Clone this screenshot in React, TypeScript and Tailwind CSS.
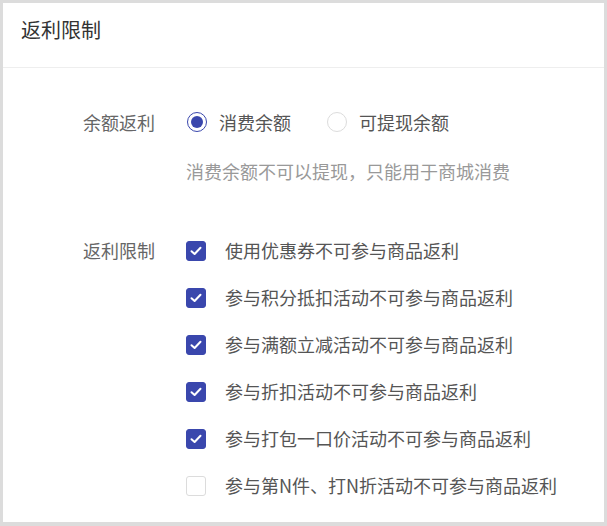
import React, { useState } from "react";

const rules = [
  "使用优惠券不可参与商品返利",
  "参与积分抵扣活动不可参与商品返利",
  "参与满额立减活动不可参与商品返利",
  "参与折扣活动不可参与商品返利",
  "参与打包一口价活动不可参与商品返利",
  "参与第N件、打N折活动不可参与商品返利",
];

function Radio({ checked, label, onClick }: { checked: boolean; label: string; onClick: () => void }) {
  return (
    <button onClick={onClick} className="flex items-center gap-[12px]">
      <span
        className={`w-[20px] h-[20px] rounded-full border flex items-center justify-center ${
          checked ? "border-[#3a47ad]" : "border-[#dcdcdc]"
        }`}
      >
        {checked && <span className="w-[12px] h-[12px] rounded-full bg-[#3a47ad]" />}
      </span>
      <span className="text-[18px] text-[#555]">{label}</span>
    </button>
  );
}

function Checkbox({ checked, label, onClick }: { checked: boolean; label: string; onClick: () => void }) {
  return (
    <button onClick={onClick} className="flex items-center gap-[19px] h-[47px]">
      <span
        className={`w-[20px] h-[20px] rounded-[3px] border flex items-center justify-center ${
          checked ? "bg-[#3a47ad] border-[#3a47ad]" : "bg-white border-[#dcdcdc]"
        }`}
      >
        {checked && (
          <svg width="12" height="10" viewBox="0 0 12 10" fill="none">
            <path d="M1.5 5.2 L4.6 8 L10.5 1.8" stroke="white" strokeWidth="2" strokeLinecap="round" strokeLinejoin="round" />
          </svg>
        )}
      </span>
      <span className="text-[18px] text-[#555]">{label}</span>
    </button>
  );
}

export default function App() {
  const [balance, setBalance] = useState<"consume" | "withdraw">("consume");
  const [checked, setChecked] = useState<boolean[]>([true, true, true, true, true, false]);

  return (
    <div
      className="w-[607px] h-[526px] bg-[#dcdcdc] pt-[3px] px-[3px] pb-[4px]"
      style={{ fontFamily: '"Noto Sans CJK SC", "Noto Sans", sans-serif' }}
    >
      <div className="bg-white h-full">
        <div className="h-[65px] px-[18px] pt-[14px] text-[20px] leading-[26px] text-[#333] border-b border-[#eee]">
          返利限制
        </div>
        <div className="pl-[80px] pt-[34px]">
          <div className="flex items-center h-[40px]">
            <div className="w-[72px] text-[18px] text-[#666]">余额返利</div>
            <div className="ml-[32px] flex items-center gap-[36px]">
              <Radio checked={balance === "consume"} label="消费余额" onClick={() => setBalance("consume")} />
              <Radio checked={balance === "withdraw"} label="可提现余额" onClick={() => setBalance("withdraw")} />
            </div>
          </div>
          <div className="ml-[103px] mt-[18px] text-[18px] leading-[22px] text-[#999]">
            消费余额不可以提现，只能用于商城消费
          </div>
          <div className="flex mt-[45px]">
            <div className="w-[72px] h-[47px] flex items-center text-[18px] text-[#666]">返利限制</div>
            <div className="ml-[31px] flex flex-col">
              {rules.map((rule, i) => (
                <Checkbox
                  key={rule}
                  checked={checked[i]}
                  label={rule}
                  onClick={() =>
                    setChecked((prev) => {
                      const next = [...prev];
                      next[i] = !next[i];
                      return next;
                    })
                  }
                />
              ))}
            </div>
          </div>
        </div>
      </div>
    </div>
  );
}
